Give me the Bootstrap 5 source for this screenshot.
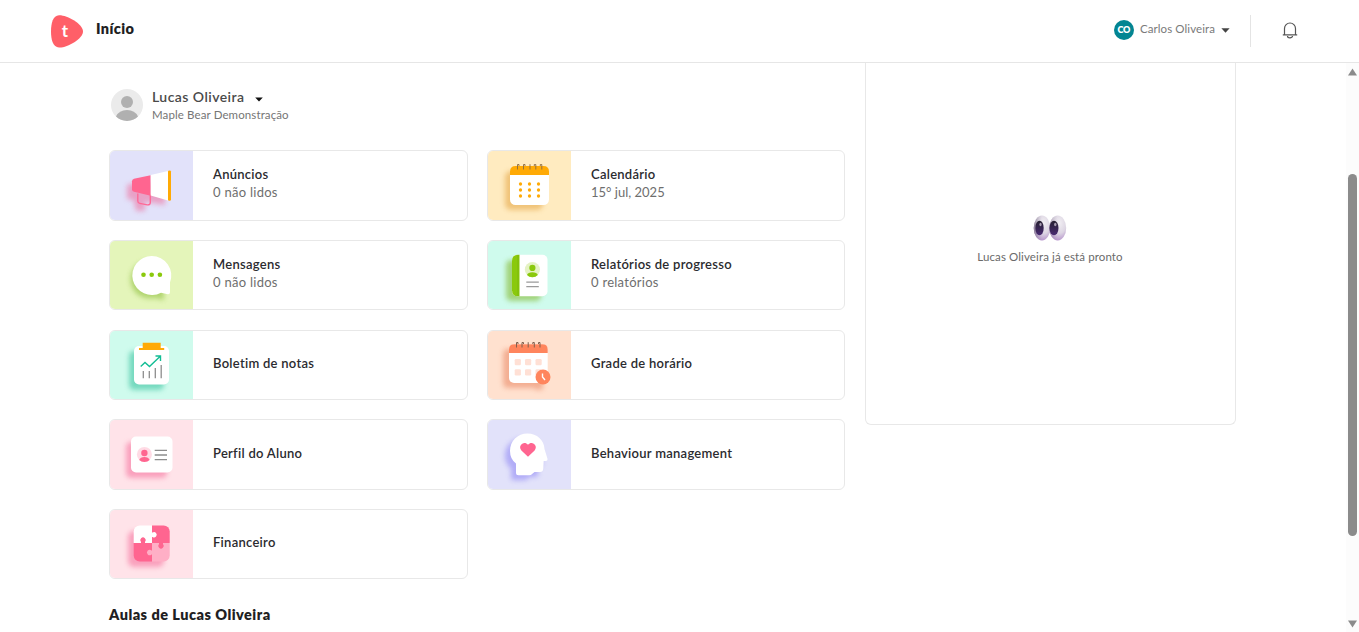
<!DOCTYPE html>
<html lang="pt-BR">
<head>
<meta charset="utf-8">
<meta name="viewport" content="width=device-width, initial-scale=1">
<title>Início</title>
<link href="https://cdn.jsdelivr.net/npm/bootstrap@5.3.0/dist/css/bootstrap.min.css" rel="stylesheet">
<style>
body{font-family:Lato,"Liberation Sans",sans-serif;font-size:13px;line-height:18px;color:#2b2b2f;background:#fff}
.topbar{height:63px;border-bottom:1px solid #e6e6e6;padding:0 61px 1px 51px}
.logo{margin-top:1px}
.page-title{font-size:14.500px;font-weight:800;color:#1f1f23;margin:-3px 0 0 13px;letter-spacing:.4px}
.initials{width:20px;height:20px;background:#038592;color:#fff;font-size:9px;font-weight:800;margin-top:-1px}
.user-name{font-size:11.500px;color:#7a7a7a;margin:-3px 6px 0 6px;letter-spacing:.09px}
.rule{width:1px;height:32px;background:#e4e4e4;margin:0 31px 0 20px}
.student{height:36px;margin-top:25px}
.student>svg{margin:0 9px 2px 2px}
.student-name{font-size:14px;font-weight:600;color:#4a4a4a;letter-spacing:.45px}
.school{font-size:11.5px;color:#757575;letter-spacing:.11px}
.content{width:736px;margin-left:109px}
.tiles{display:grid;grid-template-columns:359px 358px;column-gap:19px;row-gap:19.5px;margin-top:26.4px}
.tile{height:70.2px;border:1px solid #e8e8e8;border-radius:6px;overflow:hidden;background:#fff}
.tile>svg{width:84px;height:70px;margin:-1px 0 0 -1px;flex:none}
.tile-text{margin:0 0 4px 20px}
.tile-text.plain{margin-bottom:3.500px}
.tile-title{font-weight:600;color:#2b2b2f;font-size:13px;letter-spacing:.27px}
.tile-sub{color:#6e6e6e;font-size:13px;letter-spacing:.27px}
.tile-sub.date{letter-spacing:0}
.classes{font-size:14.500px;font-weight:800;color:#1f1f23;margin:26.500px 0 0;letter-spacing:.48px}
.feed{width:371px;height:362px;margin-left:20px;border:1px solid #e8e8e8;border-top:0;border-radius:0 0 6px 6px;padding:151px 1px 0 0}
.feed p{font-size:11.5px;color:#6a6a6a;margin-top:5.500px;letter-spacing:.11px}
.track{width:13px;background:#fcfcfc;padding:5px 0 4px}
.thumb{width:9px;height:362px;border-radius:5px;background:#8b8b8b;margin-top:98px}
</style>
</head>
<body class="vh-100 overflow-hidden d-flex flex-column">
<svg width="0" height="0" class="position-absolute"><defs><filter id="soft" x="-40%" y="-40%" width="180%" height="180%"><feGaussianBlur stdDeviation="2.9"/></filter></defs></svg>
<header class="topbar d-flex align-items-center flex-shrink-0">
  <svg class="logo" width="32" height="33" viewBox="0 0 32 33"><path d="M8 .3C16 0 32 9 32 16.500S16 33 8 32.500C2 32 0 25 0 16.500S2 .8 8 .3Z" fill="#ff5f68"/><text x="10.800" y="22" font-size="17" font-weight="700" fill="#fff">t</text></svg>
  <h1 class="page-title">Início</h1>
  <div class="ms-auto d-flex align-items-center">
    <span class="initials rounded-circle d-flex align-items-center justify-content-center"><span>CO</span></span>
    <span class="user-name"><span>Carlos Oliveira</span></span>
    <svg width="9" height="5" viewBox="0 0 9 5"><path d="M.4.2h8.200L4.500 4.800Z" fill="#444"/></svg>
    <span class="rule"></span>
    <svg width="16" height="17" viewBox="0 0 16 17" fill="none" stroke="#555" stroke-width="1.200"><path d="M.8 12.900h14.400M2.500 12.500V6.500a5.500 5.500 0 0 1 11 0v6M5.500 14a2.500 1.900 0 0 0 5 0"/></svg>
  </div>
</header>
<div class="d-flex flex-grow-1 overflow-hidden">
  <main class="d-flex align-items-start flex-grow-1">
    <section class="content">
      <div class="student d-flex align-items-center">
        <svg width="32" height="32" viewBox="0 0 32 32"><circle cx="16" cy="16" r="16" fill="#ebebeb"/><circle cx="16" cy="13" r="6" fill="#b0b0b0"/><path d="M5 27.500Q8 21 16 21t11 6.500A16 16 0 0 1 5 27.500Z" fill="#b0b0b0"/></svg>
        <div>
          <div class="student-name d-flex align-items-center"><span>Lucas Oliveira</span><svg class="ms-2 mt-1" width="10" height="5" viewBox="-2 0 10 5"><path d="M.2.500h7.600L4 4.500Z" fill="#111"/></svg></div>
          <div class="school"><span>Maple Bear Demonstração</span></div>
        </div>
      </div>
      <div class="tiles">
        <a class="tile d-flex align-items-center text-decoration-none">
          <svg viewBox="0 0 84 70"><path fill="#e2e2fa" d="M0 0h84v70H0z"/><g filter="url(#soft)" fill="#ee6c9c" opacity=".55"><path d="M18 35 37 30 56 42v13L18 49Z"/><path d="M24 48h12v13H27Z"/></g><path d="M28.800 43.500V51q0 2 2 2.400l7.500 1.500q3 .2 3-2.500V44" fill="none" stroke="#ff6896" stroke-width="1.400"/><path d="M41.700 25.200 25 28.800q-2 .5-2 2.500v8q0 2 2 2.500l16.700 3.900Z" fill="#ff6590"/><path d="M41.700 25 59 21v29.500l-17.300-5Z" fill="#fff"/><path d="M59 21.500q0-1 1.500-1t1.500 1v28.300q0 1-1.500 1t-1.500-1Z" fill="#ffaa05"/></svg>
          <div class="tile-text"><div class="tile-title"><span>Anúncios</span></div><div class="tile-sub"><span>0 não lidos</span></div></div>
        </a>
        <a class="tile d-flex align-items-center text-decoration-none">
          <svg viewBox="0 0 84 70"><path fill="#ffebc0" d="M0 0h84v70H0z"/><rect x="18" y="21" width="38" height="39" rx="6" fill="#e3a23d" opacity=".55" filter="url(#soft)"/><rect x="23" y="16" width="39" height="39" rx="5.500" fill="#fff"/><path d="M23 25v-3.500Q23 16 28.500 16h28q5.500 0 5.500 5.500V25Z" fill="#ffaa05"/><g fill="none" stroke="#8a6b43" stroke-width=".9"><path d="M30.500 19.500v-5h1.500v1.500M36.500 19.500v-5h1.500v1.500M43 14.200v5.300M48.800 19.500v-5h-1.500v1.500M54.800 19.500v-5h-1.500v1.500"/></g><g fill="#ffaa05"><circle cx="33.500" cy="34" r="1.650"/><circle cx="42.500" cy="34" r="1.650"/><circle cx="51.500" cy="34" r="1.650"/><circle cx="33.500" cy="40" r="1.650"/><circle cx="42.500" cy="40" r="1.650"/><circle cx="51.500" cy="40" r="1.650"/><circle cx="33.500" cy="46" r="1.650"/><circle cx="42.500" cy="46" r="1.650"/><circle cx="51.500" cy="46" r="1.650"/></g></svg>
          <div class="tile-text"><div class="tile-title"><span>Calendário</span></div><div class="tile-sub date"><span>15° jul, 2025</span></div></div>
        </a>
        <a class="tile d-flex align-items-center text-decoration-none">
          <svg viewBox="0 0 84 70"><path fill="#e4f5ba" d="M0 0h84v70H0z"/><path d="M36 21a19 19 0 1 0 9 37l10 2V47Q59 21 36 21Z" fill="#8ebf3c" opacity=".6" filter="url(#soft)"/><path d="M42.700 16A19.500 19.500 0 1 0 52 52.700l7 1.500q2 .1 2-2V42.500A19.500 19.500 0 0 0 42.700 16Z" fill="#fff"/><g fill="#8ac90c"><circle cx="34.500" cy="34.700" r="2.300"/><circle cx="42.700" cy="34.700" r="2.300"/><circle cx="50.900" cy="34.700" r="2.300"/></g></svg>
          <div class="tile-text"><div class="tile-title"><span>Mensagens</span></div><div class="tile-sub"><span>0 não lidos</span></div></div>
        </a>
        <a class="tile d-flex align-items-center text-decoration-none">
          <svg viewBox="0 0 84 70"><path fill="#cffbed" d="M0 0h84v70H0z"/><rect x="19" y="20" width="35" height="41" rx="5" fill="#83b92d" opacity=".6" filter="url(#soft)"/><rect x="25" y="14.700" width="35.500" height="41.500" rx="5" fill="#fff"/><path d="M32.500 14.700H31q-6 0-6 6v29.500q0 6 6 6h1.500Z" fill="#8ac90c"/><path d="M31 15v41" stroke="#72b00a" stroke-width=".6"/><circle cx="45.400" cy="29.600" r="7.600" fill="#e4f2c3"/><circle cx="45.400" cy="27.900" r="3.100" fill="#8ac90c"/><path d="M40 35q1-2.700 5.400-2.700T50.800 35q-2 2.300-5.400 2.300T40 35Z" fill="#8ac90c"/><path d="M39.300 42.200h12.500M39.300 46.700h12.500" stroke="#9a9a9a" stroke-width="1.200"/></svg>
          <div class="tile-text"><div class="tile-title"><span>Relatórios de progresso</span></div><div class="tile-sub"><span>0 relatórios</span></div></div>
        </a>
        <a class="tile d-flex align-items-center text-decoration-none">
          <svg viewBox="0 0 84 70"><path fill="#cffbed" d="M0 0h84v70H0z"/><rect x="20" y="22" width="35" height="39" rx="5" fill="#3bc3a0" opacity=".6" filter="url(#soft)"/><rect x="25" y="17" width="35" height="38.500" rx="5" fill="#fff"/><path d="M33.700 13.700h18V19h3.500v2H30v-2h3.700Z" fill="#ffaa05"/><path d="m31.700 37.500 4.300-4 4.500 4L51.500 27M46.500 27h5v5" fill="none" stroke="#12bd94" stroke-width="1.400"/><path d="M34.300 42v7.300M40.300 42v7.300M46.300 39v10.300M52.200 36v13.300" stroke="#8d8d8d" stroke-width="1.300"/></svg>
          <div class="tile-text plain"><div class="tile-title"><span>Boletim de notas</span></div></div>
        </a>
        <a class="tile d-flex align-items-center text-decoration-none">
          <svg viewBox="0 0 84 70"><path fill="#ffe1cf" d="M0 0h84v70H0z"/><path d="M16 25q0-5 5-5h29q5 0 5 5v28q4 9-4 8l-6-2H21q-5 0-5-5Z" fill="#ea8966" opacity=".58" filter="url(#soft)"/><rect x="22" y="15.300" width="38.700" height="38.700" rx="5" fill="#fff"/><path d="M22 24v-3.500q0-5.200 5.200-5.200h28.300q5.200 0 5.200 5.200V24Z" fill="#ff855d"/><path d="M29.500 18.500v-5H31V15M35 18.500v-5h1.500V15M41.200 13.200v5.300M47.300 18.500v-5h-1.500V15M53 18.500v-5h-1.500V15" fill="none" stroke="#80604f"/><g fill="#ffe0d5"><rect x="27.700" y="30" width="6.200" height="6.200" rx="1.200"/><rect x="38" y="30" width="6.200" height="6.200" rx="1.200"/><rect x="48.500" y="30" width="6.200" height="6.200" rx="1.200"/><rect x="27.700" y="40.300" width="6.200" height="6.200" rx="1.200"/><rect x="38" y="40.300" width="6.200" height="6.200" rx="1.200"/><rect x="48.500" y="40.300" width="6.200" height="6.200" rx="1.200"/></g><circle cx="56" cy="48" r="7.500" fill="#ff855d"/><path d="M55.500 44.500V48l2.500 3" fill="none" stroke="#fff" stroke-width="1.400"/></svg>
          <div class="tile-text plain"><div class="tile-title"><span>Grade de horário</span></div></div>
        </a>
        <a class="tile d-flex align-items-center text-decoration-none">
          <svg viewBox="0 0 84 70"><path fill="#ffe3e9" d="M0 0h84v70H0z"/><rect x="17" y="23" width="41" height="36" rx="5" fill="#f56b99" opacity=".55" filter="url(#soft)"/><rect x="22" y="17.500" width="41.500" height="36" rx="5" fill="#fff"/><circle cx="35.400" cy="35.400" r="7.500" fill="#ffdbe5"/><circle cx="35.400" cy="34" r="3.200" fill="#ff6590"/><path d="M30.200 41q1-3 5.200-3t5.200 3q-2 2-5.200 2t-5.200-2Z" fill="#ff6590"/><path d="M45.700 31.400H58M45.700 36H58M45.700 40.600H58" stroke="#8d8d8d" stroke-width="1.300"/></svg>
          <div class="tile-text"><div class="tile-title"><span>Perfil do Aluno</span></div></div>
        </a>
        <a class="tile d-flex align-items-center text-decoration-none">
          <svg viewBox="0 0 84 70"><defs><path id="head" d="M40.500 14.500C50 14.500 57 21 57.500 30l2.900 9.500q.6 2.300-1.700 2.500h-2l-.5 8q-.2 3-3.200 3h-5.500l-3 2.500q-.5.800-2 .8H31.500q-2.500 0-2.500-2.500V44.500Q23 40 23 32C23 22 30.500 14.500 40.500 14.500Z"/></defs><path fill="#e2e2fa" d="M0 0h84v70H0z"/><use href="#head" transform="translate(-5 5)" fill="#8278f4" opacity=".5" filter="url(#soft)"/><use href="#head" fill="#fff"/><path d="m41 37.800-6.600-6.300c-4-4.500 2.600-10.300 6.600-5.700 4-4.600 10.600 1.200 6.600 5.700Z" fill="#ff6590"/></svg>
          <div class="tile-text"><div class="tile-title"><span>Behaviour management</span></div></div>
        </a>
        <a class="tile d-flex align-items-center text-decoration-none">
          <svg viewBox="0 0 84 70"><defs><clipPath id="pz"><rect x="24.700" y="16.500" width="36" height="36" rx="6"/></clipPath></defs><path fill="#ffe3e9" d="M0 0h84v70H0z"/><rect x="19" y="22" width="36" height="36" rx="6" fill="#f56b99" opacity=".55" filter="url(#soft)"/><g clip-path="url(#pz)"><path d="M24 16h19v18H24Z" fill="#fff"/><path d="M43 16h19v18H43ZM24 34h19v19H24Z" fill="#ff6590"/><path d="M43 34h19v19H43Z" fill="#ffafc6"/><path d="M42 23.500h1.500a2.700 2.700 0 1 1 0 4.500H42Z" fill="#fff"/><path d="M32 35v-2a2.700 2.700 0 1 1 4 0v2ZM50 33v2a2.700 2.700 0 1 0 4 0v-2Z" fill="#ff6590"/><path d="M44 41.500h-1.500a2.700 2.700 0 1 0 0 4H44Z" fill="#ffafc6"/></g></svg>
          <div class="tile-text"><div class="tile-title"><span>Financeiro</span></div></div>
        </a>
      </div>
      <h2 class="classes"><span>Aulas de Lucas Oliveira</span></h2>
    </section>
    <aside class="feed text-center">
      <svg width="34" height="28" viewBox="0 0 34 28" class="d-block mx-auto"><defs><radialGradient id="eye" cx=".6" cy=".3" r=".75"><stop stop-color="#f1eef3"/><stop offset=".55" stop-color="#ddd6e3"/><stop offset="1" stop-color="#b18bc9"/></radialGradient><linearGradient id="eye-left"><stop stop-color="#777080" stop-opacity=".75"/><stop offset=".5" stop-color="#b9b0c2" stop-opacity="0"/></linearGradient><linearGradient id="pupil" x2="0" y2="1"><stop stop-color="#262030"/><stop offset="1" stop-color="#492a73"/></linearGradient></defs><ellipse cx="9" cy="14" rx="8.300" ry="12.500" fill="url(#eye)"/><ellipse cx="9" cy="14" rx="8.300" ry="12.500" fill="url(#eye-left)"/><ellipse cx="24.700" cy="14" rx="8.500" ry="12.500" fill="url(#eye)"/><ellipse cx="24.700" cy="14" rx="8.500" ry="12.500" fill="url(#eye-left)" opacity=".6"/><ellipse cx="6.500" cy="14" rx="4.200" ry="7.300" fill="url(#pupil)"/><ellipse cx="21" cy="14" rx="4.500" ry="7.300" fill="url(#pupil)"/><ellipse cx="7.500" cy="10.500" rx="1.100" ry="1.700" fill="#a69bb0"/><ellipse cx="22.300" cy="10.500" rx="1.200" ry="1.800" fill="#a69bb0"/></svg>
      <p class="mb-0"><span>Lucas Oliveira já está pronto</span></p>
    </aside>
  </main>
  <div class="track d-flex flex-column align-items-center flex-shrink-0">
    <svg width="9" height="8" viewBox="0 0 9 8"><path d="M4.500.500 9 7.500H0Z" fill="#8b8b8b"/></svg>
    <div class="thumb"></div>
    <svg class="mt-auto" width="9" height="8" viewBox="0 0 9 8"><path d="M0 .500h9L4.500 7.500Z" fill="#8b8b8b"/></svg>
  </div>
</div>
<script src="https://cdn.jsdelivr.net/npm/bootstrap@5.3.0/dist/js/bootstrap.bundle.min.js"></script>
</body>
</html>
